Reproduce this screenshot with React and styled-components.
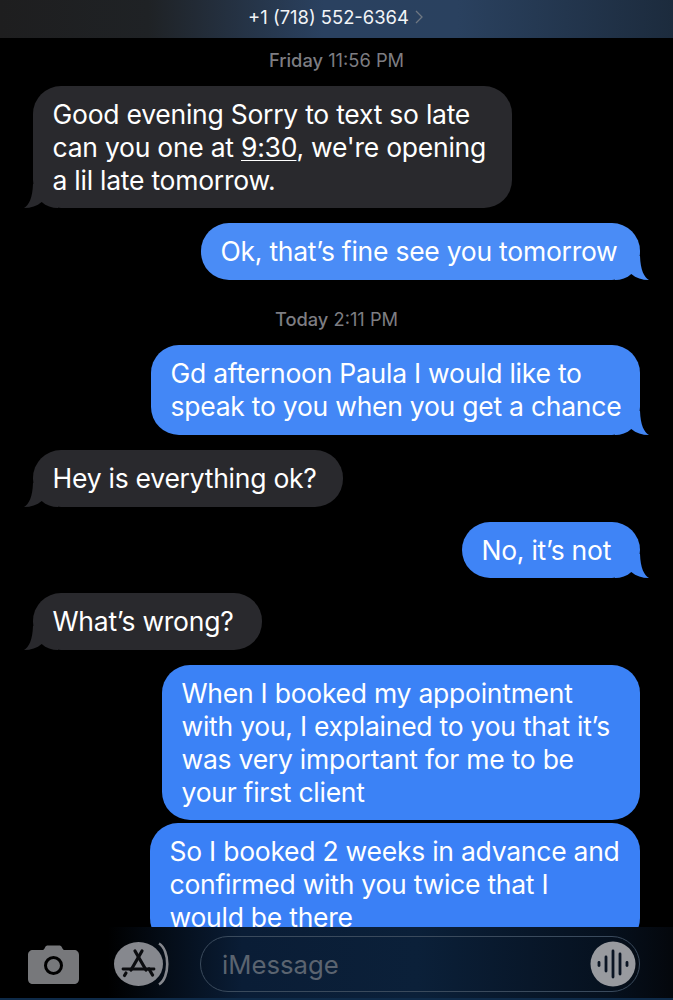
import React from "react";
import styled, { createGlobalStyle } from "styled-components";

const Global = createGlobalStyle`
    html, body { margin: 0; padding: 0; background: #000; }
    body { font-family: Inter, "Noto Sans", "Liberation Sans", sans-serif; }
`;

const Screen = styled.div`
    width: 673px;
    height: 1000px;
    display: flex;
    flex-direction: column;
    overflow: hidden;
    background: #000;
`;

const Header = styled.header`
    flex: 0 0 38px;
    height: 38px;
    display: flex;
    align-items: center;
    justify-content: center;
    gap: 6px;
    padding: 0 2px 4px 0;
    box-sizing: border-box;
    background: linear-gradient(90deg, #1e1e1f 0%, #1f2225 22%, #2a4160 48%, #2a415f 68%, #1c2b3d 100%);
    color: #f2f4f7;
    font-size: 18.4px;
`;

const Thread = styled.main`
    flex: 1 1 auto;
    min-height: 0;
    overflow: hidden;
    display: flex;
    flex-direction: column;
    padding: 0 33px;
`;

const Stamp = styled.div`
    flex: none;
    height: ${(p) => p.$height}px;
    padding-top: ${(p) => p.$top}px;
    box-sizing: border-box;
    text-align: center;
    color: #7d7d82;
    font-size: 18.3px;
    line-height: 22px;
    b { font-weight: 500; }
`;

const Row = styled.div`
    display: flex;
    flex: 0 0 auto;
    justify-content: ${(p) => (p.$me ? "flex-end" : "flex-start")};
    margin-bottom: ${(p) => (p.$tight ? 3 : 15)}px;
`;

const Bubble = styled.div`
    position: relative;
    z-index: 0;
    box-sizing: border-box;
    width: ${(p) => p.$width}px;
    padding: 12px 0 12px 19.5px;
    border-radius: 28px;
    background: ${(p) => p.$tone};
    color: #fff;
    font-size: 26.5px;
    letter-spacing: -0.25px;
    line-height: 32.8px;
    white-space: nowrap;
    u { text-underline-offset: 3px; text-decoration-thickness: 1px; }
`;

const Tail = styled.svg`
    position: absolute;
    z-index: -1;
    bottom: 0;
    width: 34px;
    height: 24px;
    ${(p) => (p.$me ? "right: -9px;" : "left: -9px; transform: scaleX(-1);")}
`;

const Composer = styled.footer`
    flex: 0 0 73px;
    height: 73px;
    box-sizing: border-box;
    display: flex;
    align-items: center;
    padding: 3px 33px 0 28px;
    background: linear-gradient(90deg, #000 0%, #000 16%, #0a1d36 36%, #0b2039 62%, #06111f 90%, #04070c 100%);
    border-bottom: 2px solid #0e2a48;
`;

const Apps = styled.svg`
    width: 58px;
    height: 44px;
    margin-left: 35px;
    margin-right: 28px;
    flex: none;
`;

const Field = styled.div`
    flex: 1;
    height: 56px;
    box-sizing: border-box;
    display: flex;
    align-items: center;
    justify-content: space-between;
    padding: 0 3px 0 21px;
    border: 1.5px solid #3a4a5c;
    border-radius: 28px;
    color: #5b6470;
    font-size: 25.7px;
`;

const BubbleTail = ({ me, tone }) => (
    <Tail $me={me} viewBox="0 0 34 24">
        <path d="M0 24 C6 24 12 22 16.3 18 C21 22 27 24 34 24 C29 21 25.5 14 25 0 L0 0 Z" fill={tone} />
    </Tail>
);

const Me = ({ width, tone = "#3d84f6", tight, children }) => (
    <Row $me $tight={tight}>
        <Bubble $width={width} $tone={tone}>
            {children}
            {!tight && <BubbleTail me tone={tone} />}
        </Bubble>
    </Row>
);

const Them = ({ width, children }) => (
    <Row>
        <Bubble $width={width} $tone="#29292d">
            {children}
            <BubbleTail tone="#29292d" />
        </Bubble>
    </Row>
);

const Camera = () => (
    <svg width="51" height="39" viewBox="0 0 51 39" style={{ flex: "none" }}>
        <path
            fillRule="evenodd"
            fill="#77787b"
            d="M5 5 H14 C15 5 16 4.6 16.5 3.5 L17 2.5 C17.6 1 18.6 0.5 20 0.5 H31 C32.4 0.5 33.4 1 34 2.5 L34.5 3.5 C35 4.6 36 5 37 5 H46 C49 5 51 7 51 10 V34 C51 37 49 39 46 39 H5 C2 39 0 37 0 34 V10 C0 7 2 5 5 5 Z M25.5 11 A9.5 9.5 0 1 0 25.5 30 A9.5 9.5 0 1 0 25.5 11 Z M25.5 14 A6.5 6.5 0 1 1 25.5 27 A6.5 6.5 0 1 1 25.5 14 Z"
        />
    </svg>
);

const AppStore = () => (
    <Apps viewBox="0 0 58 44">
        <ellipse cx="24.5" cy="22" rx="24.5" ry="22" fill="#86888e" />
        <path d="M45 1.5 C56 8 56 36 45 42.5" fill="none" stroke="#86888e" strokeWidth="2.6" />
        <g fill="none" stroke="#0c0d10" strokeWidth="3.2" strokeLinecap="round">
            <path d="M28 9 L17 28" />
            <path d="M21 9 L32 28" />
            <path d="M9 27 H40" strokeWidth="2.8" />
            <path d="M12 31 L10.5 33.5" />
            <path d="M35 27 L38.5 33" />
        </g>
    </Apps>
);

const Voice = () => (
    <svg width="46" height="46" viewBox="0 0 46 46" style={{ flex: "none" }}>
        <circle cx="23" cy="23" r="22.5" fill="#989a9f" />
        <g stroke="#0b1524" strokeWidth="2.8" strokeLinecap="round">
            <path d="M9 21.5 V24.5" />
            <path d="M16 16 V30" />
            <path d="M23 10 V36" />
            <path d="M30 13 V33" />
            <path d="M37 21.5 V24.5" />
        </g>
    </svg>
);

const App = () => (
    <Screen>
        <Global />
        <Header>
            +1 (718) 552-6364
            <svg width="8" height="14" viewBox="0 0 8 14">
                <path d="M1 1 L7 7 L1 13" fill="none" stroke="#6f7782" strokeWidth="1.3" />
            </svg>
        </Header>
        <Thread>
            <Stamp $height={48} $top={11}>
                <b>Friday</b> 11:56 PM
            </Stamp>
            <Them width={479}>
                Good evening Sorry to text so late
                <br />
                can you one at <u>9:30</u>, we're opening
                <br />a lil late tomorrow.
            </Them>
            <Me width={439} tone="#4a8cf6">Ok, that’s fine see you tomorrow</Me>
            <Stamp $height={50} $top={13}>
                <b>Today</b> 2:11 PM
            </Stamp>
            <Me width={489} tone="#4387f6">
                Gd afternoon Paula I would like to
                <br />
                speak to you when you get a chance
            </Me>
            <Them width={310}>Hey is everything ok?</Them>
            <Me width={178} tone="#3f84f6">No, it’s not</Me>
            <Them width={229}>What’s wrong?</Them>
            <Me width={478} tone="#3b82f6" tight>
                When I booked my appointment
                <br />
                with you, I explained to you that it’s
                <br />
                was very important for me to be
                <br />
                your first client
            </Me>
            <Me width={490} tone="#3a80f6" tight>
                So I booked 2 weeks in advance and
                <br />
                confirmed with you twice that I
                <br />
                would be there
            </Me>
        </Thread>
        <Composer>
            <Camera />
            <AppStore />
            <Field>
                iMessage
                <Voice />
            </Field>
        </Composer>
    </Screen>
);

export default App;
